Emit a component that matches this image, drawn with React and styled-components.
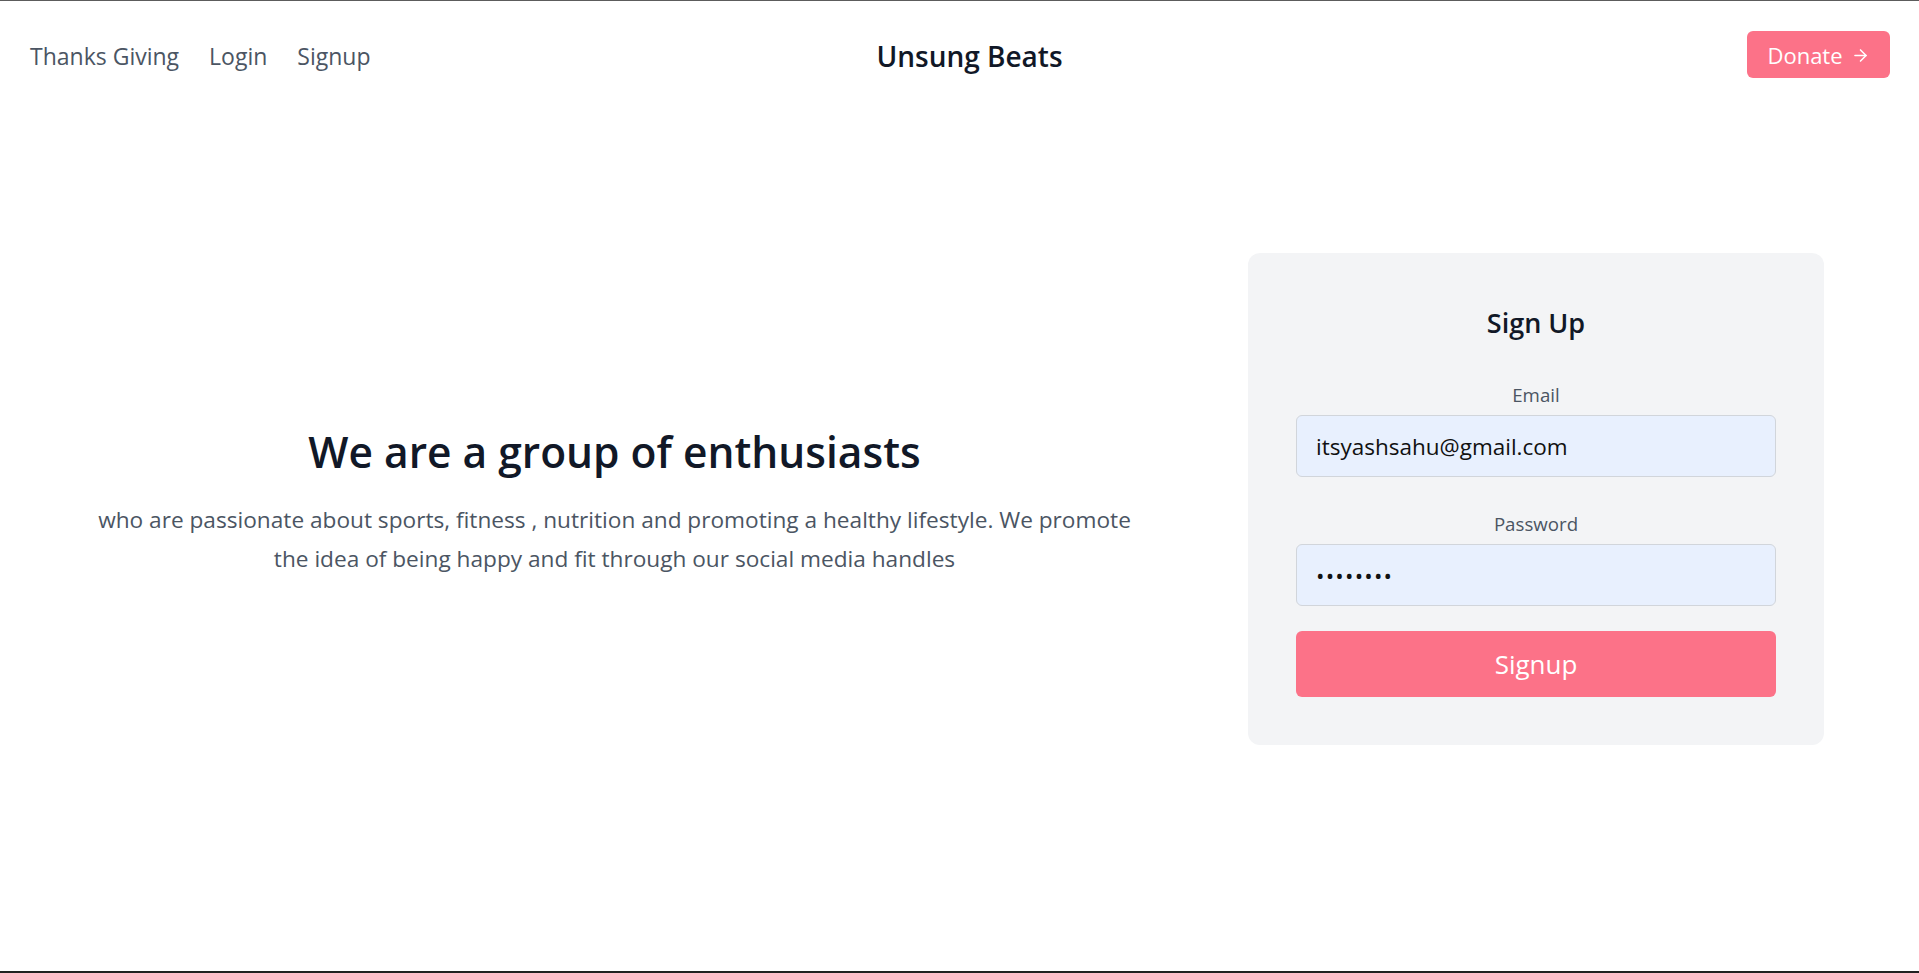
import styled, { createGlobalStyle } from "styled-components";
import { ArrowRight } from "lucide-react";

const GlobalStyle = createGlobalStyle`
  * {
    box-sizing: border-box;
  }

  html,
  body {
    margin: 0;
    padding: 0;
    background: #ffffff;
    font-family: "Open Sans", "Noto Sans", sans-serif;
  }
`;

const App = () => {
  return (
    <Page>
      <GlobalStyle />

      <Header>
        <NavLinks>
          <NavLink href="#">Thanks Giving</NavLink>
          <NavLink href="#">Login</NavLink>
          <NavLink href="#">Signup</NavLink>
        </NavLinks>

        <Brand>Unsung Beats</Brand>

        <HeaderEnd>
          <DonateButton type="button">
            Donate
            <ArrowRight size={19} strokeWidth={2} />
          </DonateButton>
        </HeaderEnd>
      </Header>

      <Main>
        <Intro>
          <Heading>We are a group of enthusiasts</Heading>
          <Lead>
            who are passionate about sports, fitness , nutrition and promoting a
            healthy lifestyle. We promote the idea of being happy and fit
            through our social media handles
          </Lead>
        </Intro>

        <Card onSubmit={(e) => e.preventDefault()}>
          <CardTitle>Sign Up</CardTitle>

          <Field>
            <Label htmlFor="email">Email</Label>
            <Input id="email" type="email" defaultValue="itsyashsahu@gmail.com" />
          </Field>

          <Field $top={33}>
            <Label htmlFor="password">Password</Label>
            <Input
              id="password"
              type="password"
              defaultValue="12345678"
              $spacing={1.2}
            />
          </Field>

          <SubmitButton type="submit">Signup</SubmitButton>
        </Card>
      </Main>
    </Page>
  );
};

export default App;

const Page = styled.div`
  height: 100vh;
  display: flex;
  flex-direction: column;
  border-top: 1px solid #5c5c5c;
  border-bottom: 2px solid #222222;
`;

const Header = styled.header`
  height: 107px;
  padding: 0 29px 0 30px;

  display: grid;
  grid-template-columns: 1fr auto 1fr;
  align-items: center;
`;

const NavLinks = styled.nav`
  display: flex;
  align-items: center;
  gap: 30px;
  padding-top: 3px;
`;

const NavLink = styled.a`
  font-size: 23px;
  color: #4b5563;
  text-decoration: none;
`;

const Brand = styled.div`
  margin-left: 19px;
  font-size: 28px;
  font-weight: 600;
  color: #111827;
  padding-top: 3px;
`;

const HeaderEnd = styled.div`
  display: flex;
  justify-content: flex-end;
`;

const DonateButton = styled.button`
  width: 143px;
  height: 47px;
  border: none;
  border-radius: 6px;
  background: #fc7288;
  color: #ffffff;
  font-family: inherit;
  font-size: 22px;
  padding-top: 2px;

  display: flex;
  align-items: center;
  justify-content: center;
  gap: 8px;
  cursor: pointer;
`;

const Main = styled.main`
  flex: 1;
  padding: 145px 95px 0 0;

  display: flex;
  align-items: flex-start;
  gap: 19px;
`;

const Intro = styled.section`
  flex: 1;
  min-height: 491px;

  display: flex;
  flex-direction: column;
  align-items: center;
  justify-content: center;
  text-align: center;
  padding-top: 5px;
`;

const Heading = styled.h1`
  margin: 0;
  font-size: 42.5px;
  line-height: 54px;
  font-weight: 600;
  color: #111827;
`;

const Lead = styled.p`
  margin: 21px 0 0;
  max-width: 1045px;
  font-size: 22.65px;
  line-height: 39px;
  color: #4b5563;
`;

const Card = styled.form`
  width: 576px;
  padding: 48px;
  border-radius: 12px;
  background: #f3f4f6;

  display: flex;
  flex-direction: column;
`;

const CardTitle = styled.h2`
  margin: 0;
  text-align: center;
  font-size: 27px;
  line-height: 44px;
  font-weight: 600;
  color: #111827;
`;

const Field = styled.div`
  margin-top: ${(p) => p.$top ?? 36}px;

  display: flex;
  flex-direction: column;
  gap: 6px;
`;

const Label = styled.label`
  text-align: center;
  font-size: 18.7px;
  line-height: 28px;
  color: #4b5563;
`;

const Input = styled.input`
  width: 100%;
  height: 62px;
  padding: 0 19px;
  border: 1px solid #d1d5db;
  border-radius: 6px;
  background: #e8f0fe;
  color: #111111;
  font-family: inherit;
  font-size: 22.5px;
  letter-spacing: ${(p) => p.$spacing ?? 0}px;
  outline: none;
`;

const SubmitButton = styled.button`
  margin-top: 25px;
  height: 66px;
  border: none;
  border-radius: 6px;
  background: #fc7288;
  color: #ffffff;
  font-family: inherit;
  font-size: 26px;
  cursor: pointer;
`;
